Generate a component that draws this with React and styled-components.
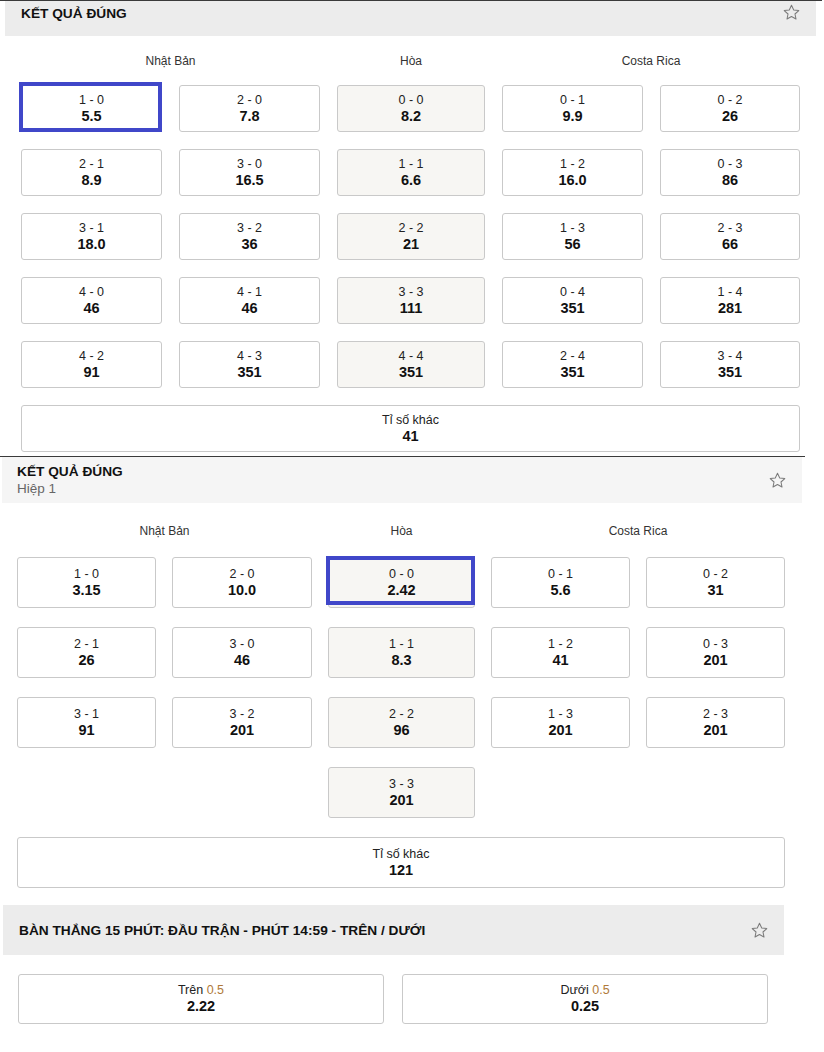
import styled, { createGlobalStyle } from "styled-components";

const GlobalStyle = createGlobalStyle`
  body {
    margin: 0;
    background: #ffffff;
    font-family: "Liberation Sans", Arial, sans-serif;
    color: #222;
  }
`;

// Styling component
const Page = styled.div`
  width: 824px;
`;

const Market = styled.section`
  width: ${({ $w }) => $w}px;
  border-top: ${({ $line }) => ($line ? "1px solid #3a3a3a" : "none")};
`;

const Header = styled.div`
  height: ${({ $h }) => $h}px;
  margin: 0 ${({ $mr }) => $mr}px 0 ${({ $ml }) => $ml}px;
  padding-left: ${({ $pl }) => $pl}px;
  padding-right: ${({ $pr }) => $pr}px;

  display: flex;
  align-items: ${({ $top }) => ($top ? "flex-start" : "center")};
  justify-content: space-between;

  background-color: ${({ $bg }) => $bg};
`;

const TitleBox = styled.div`
  display: flex;
  flex-direction: column;
  padding-top: ${({ $pt }) => $pt || 0}px;
`;

const Title = styled.span`
  font-size: 13.7px;
  font-weight: bold;
  color: #111;
`;

const SubTitle = styled.span`
  font-size: 13.5px;
  color: #666;
  margin-top: 2px;
`;

const StarWrap = styled.span`
  display: flex;
  margin-top: ${({ $mt }) => $mt || 0}px;
`;

const Grid = styled.div`
  display: grid;
  grid-template-columns: ${({ $cols }) => $cols};
  grid-template-rows: 14px;
  grid-auto-rows: ${({ $rh }) => $rh}px;
  column-gap: ${({ $cg }) => $cg}px;
  row-gap: ${({ $rg }) => $rg}px;
  margin-left: ${({ $ml }) => $ml}px;
  padding-top: ${({ $pt }) => $pt}px;
`;

const Label = styled.div`
  grid-column: ${({ $span }) => $span};
  text-align: center;
  font-size: 12px;
  line-height: 14px;
  color: #333;
`;

const Cell = styled.div`
  position: relative;
  grid-column: ${({ $col }) => $col || "auto"};
  display: flex;
  flex-direction: column;
  align-items: center;
  justify-content: center;

  border: 1px solid #c9c9c9;
  border-radius: 3px;
  background-color: ${({ $draw }) => ($draw ? "#f7f6f3" : "#ffffff")};
  box-sizing: border-box;
  cursor: pointer;
`;

const Focus = styled.span`
  position: absolute;
  left: -3px;
  right: -1px;
  top: ${({ $top }) => $top}px;
  bottom: ${({ $bottom }) => $bottom}px;
  border: 4px solid #4047c9;
  pointer-events: none;
`;

const Score = styled.span`
  font-size: 12.5px;
  color: #222;
  line-height: 15px;
`;

const Odds = styled.span`
  font-size: 14.5px;
  font-weight: bold;
  color: #111;
  line-height: 17px;
`;

const Line = styled.span`
  color: #b07a3a;
`;

const Spacer = styled.div`
  height: ${({ $h }) => $h}px;
`;

const Pair = styled.div`
  display: flex;
  gap: 18px;
  margin-left: 18px;
  padding-top: 19px;
`;

const PairCell = styled(Cell)`
  width: 366px;
  height: 50px;
`;

function Star() {
  return (
    <svg width="19" height="19" viewBox="0 0 24 24" fill="none" stroke="#7a7a7a" strokeWidth="1.3" strokeLinejoin="round">
      <path d="M12 2.8l2.8 6 6.4.7-4.8 4.4 1.3 6.4L12 17.1l-5.7 3.2 1.3-6.4-4.8-4.4 6.4-.7z" />
    </svg>
  );
}

const full = [
  [["1 - 0", "5.5"], ["2 - 0", "7.8"], ["0 - 0", "8.2"], ["0 - 1", "9.9"], ["0 - 2", "26"]],
  [["2 - 1", "8.9"], ["3 - 0", "16.5"], ["1 - 1", "6.6"], ["1 - 2", "16.0"], ["0 - 3", "86"]],
  [["3 - 1", "18.0"], ["3 - 2", "36"], ["2 - 2", "21"], ["1 - 3", "56"], ["2 - 3", "66"]],
  [["4 - 0", "46"], ["4 - 1", "46"], ["3 - 3", "111"], ["0 - 4", "351"], ["1 - 4", "281"]],
  [["4 - 2", "91"], ["4 - 3", "351"], ["4 - 4", "351"], ["2 - 4", "351"], ["3 - 4", "351"]],
];

const half = [
  [["1 - 0", "3.15"], ["2 - 0", "10.0"], ["0 - 0", "2.42"], ["0 - 1", "5.6"], ["0 - 2", "31"]],
  [["2 - 1", "26"], ["3 - 0", "46"], ["1 - 1", "8.3"], ["1 - 2", "41"], ["0 - 3", "201"]],
  [["3 - 1", "91"], ["3 - 2", "201"], ["2 - 2", "96"], ["1 - 3", "201"], ["2 - 3", "201"]],
];

function ScoreGrid({ rows, focus, focusBox, extraDraw, other, ...grid }) {
  return (
    <Grid {...grid}>
      <Label $span="1 / 3">Nhật Bản</Label>
      <Label $span="3 / 4">Hòa</Label>
      <Label $span="4 / 6">Costa Rica</Label>
      {rows.map((row, r) =>
        row.map(([s, o], c) => (
          <Cell key={r + "-" + c} $draw={c === 2}>
            {focus[0] === r && focus[1] === c && <Focus {...focusBox} />}
            <Score>{s}</Score>
            <Odds>{o}</Odds>
          </Cell>
        ))
      )}
      {extraDraw && (
        <Cell $col="3 / 4" $draw>
          <Score>{extraDraw[0]}</Score>
          <Odds>{extraDraw[1]}</Odds>
        </Cell>
      )}
      <Cell $col="1 / 6">
        <Score>Tỉ số khác</Score>
        <Odds>{other}</Odds>
      </Cell>
    </Grid>
  );
}

// Function Main
export default function App() {
  return (
    <>
      <GlobalStyle />
      <Page>
        <Market $w={822} $line>
          <Header $h={35} $ml={5} $mr={6} $pl={16} $pr={15} $bg="#ececec" $top>
            <TitleBox $pt={5}>
              <Title>KẾT QUẢ ĐÚNG</Title>
            </TitleBox>
            <StarWrap $mt={2}>
              <Star />
            </StarWrap>
          </Header>
          <ScoreGrid
            rows={full}
            focus={[0, 0]}
            focusBox={{ $top: -4, $bottom: -1 }}
            other="41"
            $cols="141px 141px 148px 141px 140px"
            $cg={17}
            $rg={17}
            $rh={47}
            $ml={21}
            $pt={18}
          />
          <Spacer $h={4} />
        </Market>

        <Market $w={805} $line>
          <Header $h={46} $ml={2} $mr={3} $pl={15} $pr={15} $bg="#f5f5f5">
            <TitleBox>
              <Title>KẾT QUẢ ĐÚNG</Title>
              <SubTitle>Hiệp 1</SubTitle>
            </TitleBox>
            <Star />
          </Header>
          <ScoreGrid
            rows={half}
            focus={[0, 2]}
            focusBox={{ $top: -2, $bottom: 2 }}
            extraDraw={["3 - 3", "201"]}
            other="121"
            $cols="139px 140px 147px 139px 139px"
            $cg={16}
            $rg={19}
            $rh={51}
            $ml={17}
            $pt={21}
          />
        </Market>

        <Spacer $h={17} />

        <Market $w={784}>
          <Header $h={50} $ml={3} $mr={0} $pl={16} $pr={15} $bg="#ececec">
            <Title>BÀN THẮNG 15 PHÚT: ĐẦU TRẬN - PHÚT 14:59 - TRÊN / DƯỚI</Title>
            <Star />
          </Header>
          <Pair>
            <PairCell>
              <Score>
                Trên <Line>0.5</Line>
              </Score>
              <Odds>2.22</Odds>
            </PairCell>
            <PairCell>
              <Score>
                Dưới <Line>0.5</Line>
              </Score>
              <Odds>0.25</Odds>
            </PairCell>
          </Pair>
        </Market>
      </Page>
    </>
  );
}
